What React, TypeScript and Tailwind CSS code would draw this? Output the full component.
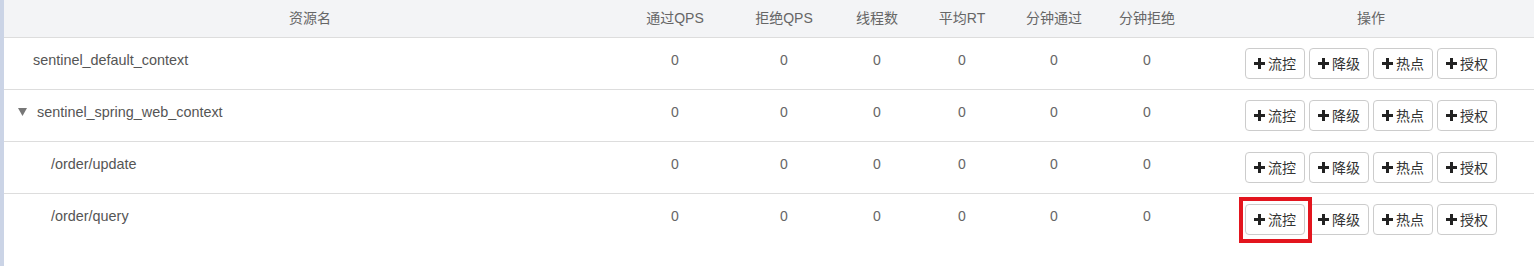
import React from "react";

type Row = { name: string; indent: number; expand?: boolean };

const rows: Row[] = [
  { name: "sentinel_default_context", indent: 29 },
  { name: "sentinel_spring_web_context", indent: 14, expand: true },
  { name: "/order/update", indent: 47 },
  { name: "/order/query", indent: 47 },
];

const headers = ["通过QPS", "拒绝QPS", "线程数", "平均RT", "分钟通过", "分钟拒绝"];
const actions = ["流控", "降级", "热点", "授权"];

const cols = "grid grid-cols-[612px_118px_100px_86px_84px_100px_86px_362px]";

function PlusIcon() {
  return (
    <svg width="11" height="11" viewBox="0 0 11 11" className="shrink-0">
      <path d="M4 0h3v4h4v3H7v4H4V7H0V4h4z" fill="#222" />
    </svg>
  );
}

function ActionButton({ label }: { label: string }) {
  return (
    <button className="flex h-[31px] w-[60px] items-center justify-center gap-[3px] rounded-[4px] border border-[#ccc] bg-white text-[14px] text-[#333]">
      <PlusIcon />
      <span>{label}</span>
    </button>
  );
}

export default function App() {
  return (
    <div
      className="relative flex h-[266px] w-[1534px] overflow-hidden bg-white"
      style={{ fontFamily: '"Liberation Sans", Arial, "Noto Sans CJK SC", sans-serif' }}
    >
      <div className="w-[4px] shrink-0 bg-[#cbd4e6]" />
      <div className="flex-1">
        <div className={`${cols} h-[38px] items-center border-b border-[#ddd] bg-[#f3f4f6] text-[14px] text-[#666]`}>
          <div className="text-center">资源名</div>
          {headers.map((h) => (
            <div key={h} className="text-center">{h}</div>
          ))}
          <div className="text-center">操作</div>
        </div>
        {rows.map((r, i) => (
          <div
            key={r.name}
            className={`${cols} h-[52px] items-start text-[14px] leading-[20px] text-[#666] ${i < rows.length - 1 ? "border-b border-[#ddd]" : ""}`}
          >
            <div className="mt-[12px] flex h-[20px] items-center gap-[10px] text-[14.4px]" style={{ paddingLeft: r.indent }}>
              {r.expand && (
                <svg width="9" height="8" viewBox="0 0 9 8" className="shrink-0">
                  <path d="M0 0h9L4.5 8z" fill="#777" />
                </svg>
              )}
              <span className="text-[#555]">{r.name}</span>
            </div>
            {headers.map((h) => (
              <div key={h} className="mt-[12px] text-center">0</div>
            ))}
            <div className="mt-[10px] flex justify-center gap-[4px]">
              {actions.map((a) => (
                <ActionButton key={a} label={a} />
              ))}
            </div>
          </div>
        ))}
      </div>
      <div className="absolute left-[1239px] top-[197px] h-[46px] w-[73px] border-[4px] border-[#e3151e]" />
    </div>
  );
}
